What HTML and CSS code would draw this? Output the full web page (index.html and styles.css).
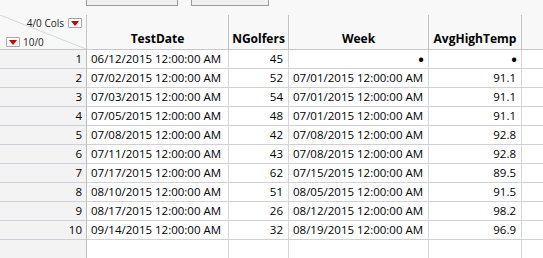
FILE: index.html
```html
<!DOCTYPE html>
<html>
<head>
<meta charset="utf-8">
<link rel="stylesheet" href="styles.css">
</head>
<body>
<div class="top">
  <div class="tab tab1"></div>
  <div class="tab tab2"></div>
</div>
<div class="grid">
  <div class="corner">
    <svg class="diag" width="86" height="34" viewBox="0 0 86 34"><line x1="0" y1="0" x2="86" y2="34" stroke="#d3d6e0" stroke-width="1"/></svg>
    <div class="corner-top"><span class="clabel">4/0 Cols</span><span class="btn"><i></i></span></div>
    <div class="corner-bot"><span class="btn"><i></i></span><span class="clabel">10/0</span></div>
  </div>
  <div class="hd">TestDate</div>
  <div class="hd">NGolfers</div>
  <div class="hd">Week</div>
  <div class="hd">AvgHighTemp</div>
  <div class="hd last"></div>

  <div class="rn">1</div><div class="c l">06/12/2015 12:00:00 AM</div><div class="c r">45</div><div class="c r miss">•</div><div class="c r miss">•</div><div class="c last"></div>
  <div class="rn">2</div><div class="c l">07/02/2015 12:00:00 AM</div><div class="c r">52</div><div class="c l">07/01/2015 12:00:00 AM</div><div class="c r">91.1</div><div class="c last"></div>
  <div class="rn">3</div><div class="c l">07/03/2015 12:00:00 AM</div><div class="c r">54</div><div class="c l">07/01/2015 12:00:00 AM</div><div class="c r">91.1</div><div class="c last"></div>
  <div class="rn">4</div><div class="c l">07/05/2015 12:00:00 AM</div><div class="c r">48</div><div class="c l">07/01/2015 12:00:00 AM</div><div class="c r">91.1</div><div class="c last"></div>
  <div class="rn">5</div><div class="c l">07/08/2015 12:00:00 AM</div><div class="c r">42</div><div class="c l">07/08/2015 12:00:00 AM</div><div class="c r">92.8</div><div class="c last"></div>
  <div class="rn">6</div><div class="c l">07/11/2015 12:00:00 AM</div><div class="c r">43</div><div class="c l">07/08/2015 12:00:00 AM</div><div class="c r">92.8</div><div class="c last"></div>
  <div class="rn">7</div><div class="c l">07/17/2015 12:00:00 AM</div><div class="c r">62</div><div class="c l">07/15/2015 12:00:00 AM</div><div class="c r">89.5</div><div class="c last"></div>
  <div class="rn">8</div><div class="c l">08/10/2015 12:00:00 AM</div><div class="c r">51</div><div class="c l">08/05/2015 12:00:00 AM</div><div class="c r">91.5</div><div class="c last"></div>
  <div class="rn">9</div><div class="c l">08/17/2015 12:00:00 AM</div><div class="c r">26</div><div class="c l">08/12/2015 12:00:00 AM</div><div class="c r">98.2</div><div class="c last"></div>
  <div class="rn">10</div><div class="c l">09/14/2015 12:00:00 AM</div><div class="c r">32</div><div class="c l">08/19/2015 12:00:00 AM</div><div class="c r">96.9</div><div class="c last"></div>

  <div class="rn empty"></div><div class="c empty"></div><div class="c empty"></div><div class="c empty"></div><div class="c empty"></div><div class="c empty last"></div>
</div>
</body>
</html>
```
FILE: styles.css
```css
* { box-sizing: border-box; }
html, body { margin: 0; padding: 0; }
body {
  width: 543px;
  height: 258px;
  overflow: hidden;
  background: #ffffff;
  font-family: "Open Sans", "Noto Sans", sans-serif;
  font-size: 11.5px;
  color: #000;
}
.top {
  height: 15px;
  background: #f8f8f8;
  display: flex;
  padding-left: 86px;
  gap: 13px;
}
.tab {
  height: 6px;
  border: 1px solid #9c9c9c;
  border-top: none;
  background: #f0f0f0;
}
.tab1 { width: 92px; }
.tab2 { width: 78px; }
.grid {
  display: grid;
  grid-template-columns: 87px 142px 60px 140px 93px 1fr;
  grid-template-rows: 35px repeat(10, 19px) 1fr;
  height: 243px;
}
.corner {
  position: relative;
  background: #f8f8f8;
  border-right: 1px solid #c4c4c4;
  border-bottom: 1px solid #c8c8cc;
  display: flex;
  flex-direction: column;
  justify-content: space-between;
  padding: 3px 4px 2px 6px;
  font-size: 10px;
  color: #222;
}
.diag { position: absolute; left: 0; top: 0; }
.corner-top {
  display: flex;
  justify-content: flex-end;
  align-items: center;
  gap: 4px;
  position: relative;
  line-height: 10px;
}
.corner-bot {
  display: flex;
  align-items: center;
  gap: 3px;
  position: relative;
  line-height: 10px;
}
.btn {
  width: 14px;
  height: 10px;
  border: 1px solid #a8a8a8;
  border-radius: 1px;
  background: #fbfbfb;
  display: flex;
  align-items: center;
  justify-content: center;
}
.btn i {
  width: 0;
  height: 0;
  border-left: 4px solid transparent;
  border-right: 4px solid transparent;
  border-top: 5px solid #cc0000;
}
.hd {
  background: #f8f8f8;
  border-right: 1px solid #c4c4c4;
  border-bottom: 1px solid #c8c8cc;
  font-weight: 700;
  font-size: 12px;
  color: #000;
  display: flex;
  align-items: flex-end;
  justify-content: center;
  padding-bottom: 2px;
  line-height: 16px;
}
.hd.last { border-right: none; }
.rn {
  background: #f3f3f3;
  border-right: 1px solid #bdbdbd;
  border-bottom: 1px solid #d0d0d6;
  text-align: right;
  padding: 0 4px;
  line-height: 18px;
}
.c {
  border-right: 1px solid #d6d6dc;
  border-bottom: 1px solid #d0d0d6;
  padding: 0 4px;
  line-height: 18px;
  white-space: nowrap;
  overflow: hidden;
}
.c.l { text-align: left; }
.c.r { text-align: right; padding-right: 5px; }
.c.miss { font-size: 15px; font-weight: 700; padding-right: 4px; }
.c.last { border-right: none; }
.empty { border-bottom: none; }
```
